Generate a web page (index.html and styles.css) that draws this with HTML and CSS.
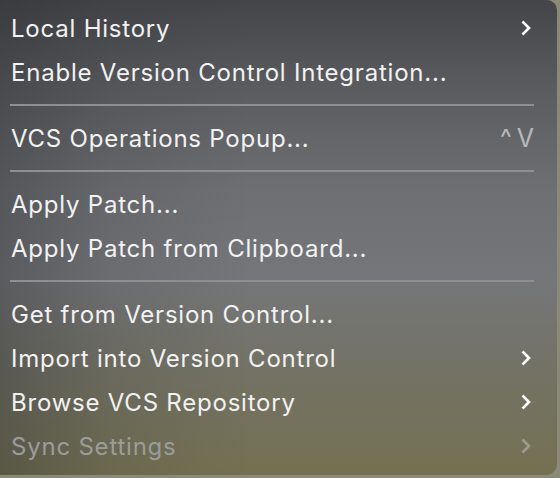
FILE: index.html
```html
<!DOCTYPE html>
<html>
<head>
<meta charset="utf-8">
<link rel="stylesheet" href="styles.css">
</head>
<body>
<div class="stage">
  <div class="menu">
    <div class="item"><span class="label">Local History</span><svg class="chev" viewBox="0 0 12 18"><polyline points="2.5,2.5 9,9 2.5,15.5"/></svg></div>
    <div class="item"><span class="label">Enable Version Control Integration...</span></div>
    <div class="sep"></div>
    <div class="item"><span class="label">VCS Operations Popup...</span><span class="shortcut">^V</span></div>
    <div class="sep"></div>
    <div class="item"><span class="label">Apply Patch...</span></div>
    <div class="item"><span class="label">Apply Patch from Clipboard...</span></div>
    <div class="sep"></div>
    <div class="item"><span class="label">Get from Version Control...</span></div>
    <div class="item"><span class="label">Import into Version Control</span><svg class="chev" viewBox="0 0 12 18"><polyline points="2.5,2.5 9,9 2.5,15.5"/></svg></div>
    <div class="item"><span class="label">Browse VCS Repository</span><svg class="chev" viewBox="0 0 12 18"><polyline points="2.5,2.5 9,9 2.5,15.5"/></svg></div>
    <div class="item disabled"><span class="label">Sync Settings</span><svg class="chev" viewBox="0 0 12 18"><polyline points="2.5,2.5 9,9 2.5,15.5"/></svg></div>
  </div>
</div>
</body>
</html>
```
FILE: styles.css
```css
html, body {
  margin: 0;
  padding: 0;
  width: 560px;
  height: 478px;
  overflow: hidden;
  background: #8a8a76;
}
.stage {
  width: 560px;
  height: 478px;
  background: #8b8a78;
}
.menu {
  box-sizing: border-box;
  width: 557px;
  height: 475px;
  border-radius: 0 10px 11px 0;
  padding-top: 6px;
  font-family: Inter, "Noto Sans", sans-serif;
  font-size: 24px;
  letter-spacing: 0.78px;
  color: #f2f2f2;
  background:
    linear-gradient(90deg, rgba(40,42,46,0.35) 0%, rgba(40,42,46,0.12) 20%, rgba(40,42,46,0) 45%),
    linear-gradient(180deg, #444548 0%, #5a5b5e 18%, #6e6f72 40%, #75767a 58%, #737265 78%, #747151 100%);
}
.item {
  height: 44px;
  display: flex;
  align-items: center;
  padding: 0 25px 0 11px;
}
.label {
  flex: 1;
  white-space: nowrap;
}
.chev {
  width: 12px;
  height: 18px;
  fill: none;
  stroke: #ffffff;
  stroke-width: 2.6;
  stroke-linecap: butt;
  stroke-linejoin: miter;
}
.shortcut {
  color: #b9b9bb;
  font-size: 25px;
  letter-spacing: 5px;
  margin-right: -7px;
}
.sep {
  height: 22px;
  display: flex;
  align-items: center;
  padding: 0 23px 0 10px;
}
.sep::before {
  content: "";
  flex: 1;
  height: 2px;
  background: #8e8f91;
}
.disabled {
  color: #9b9c9c;
}
.disabled .chev {
  stroke: #9d9c8e;
}
```
